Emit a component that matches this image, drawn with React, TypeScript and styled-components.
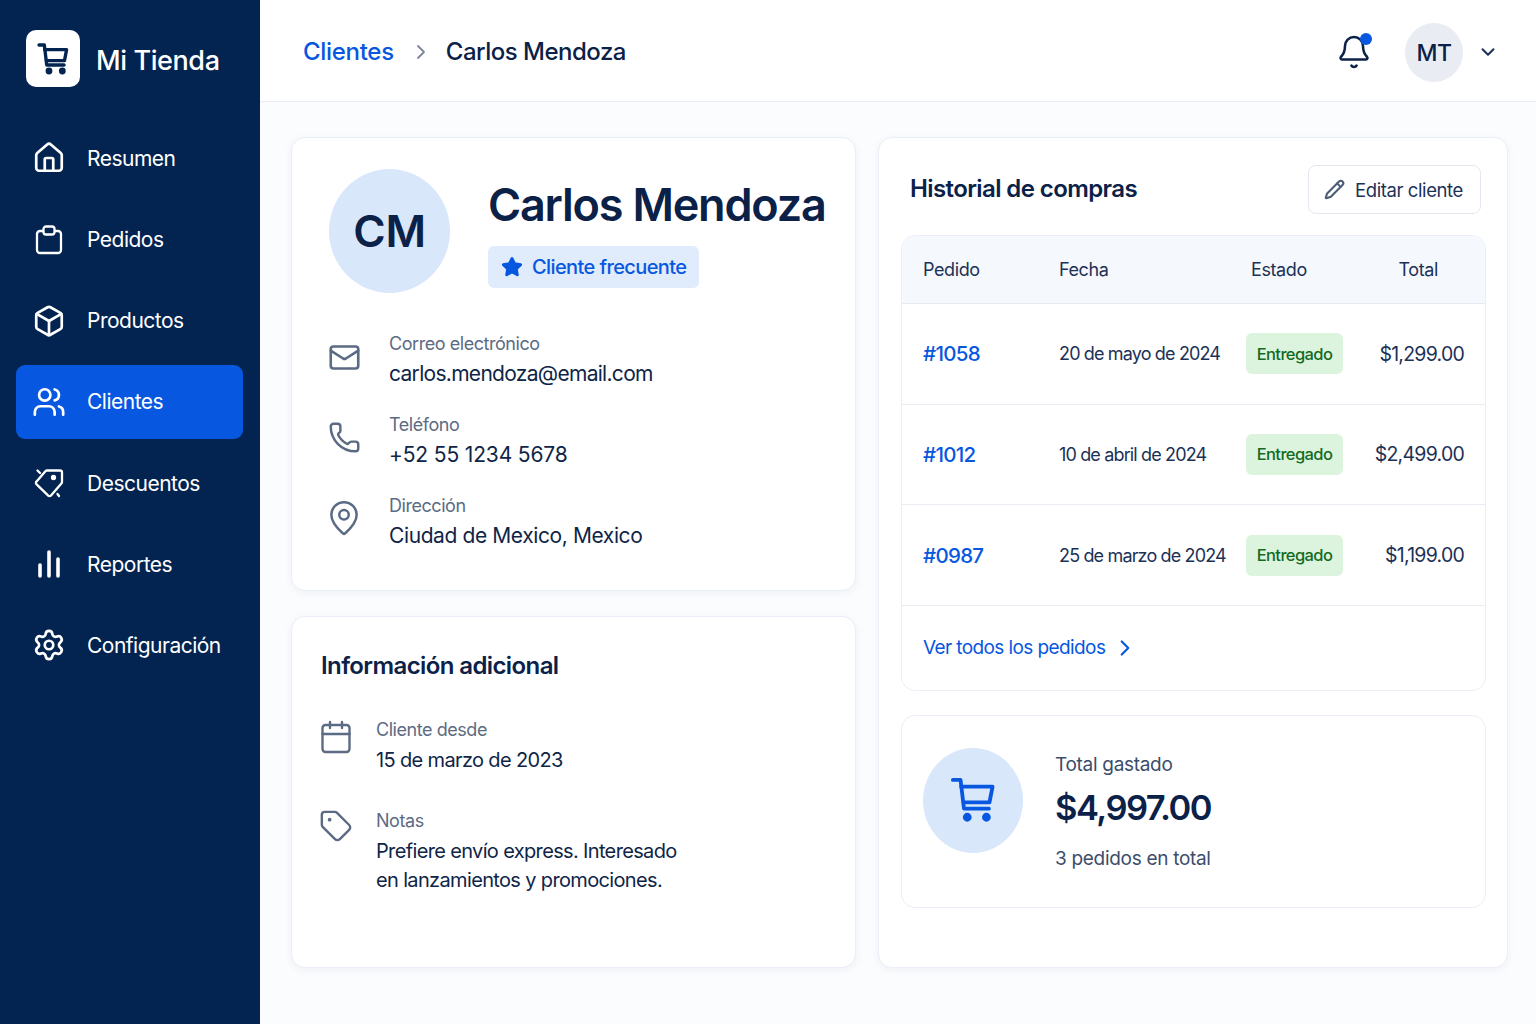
import styled, { createGlobalStyle } from "styled-components";
import {
  Bell,
  Box,
  Calendar,
  ChevronDown,
  ChevronRight,
  House,
  Mail,
  MapPin,
  Pencil,
  Phone,
  Settings,
  Star,
  Tag,
  Users,
} from "lucide-react";

const GlobalStyle = createGlobalStyle`
  * { box-sizing: border-box; }
  html, body { margin: 0; padding: 0; }
  body {
    font-family: Inter, "Noto Sans", "Liberation Sans", sans-serif;
    color: #0b2148;
    background: #fbfcfe;
  }
`;

const Page = styled.div`
  display: flex;
  width: 1536px;
  height: 1024px;
  overflow: hidden;
`;

const Sidebar = styled.aside`
  width: 260px;
  flex: none;
  background: #032451;
  padding: 30px 17px 0 16px;
`;

const Brand = styled.div`
  display: flex;
  align-items: center;
  gap: 16px;
  padding-left: 10px;
  margin-bottom: 34.4px;
`;

const BrandLogo = styled.div`
  width: 54px;
  height: 57px;
  border-radius: 10px;
  background: #ffffff;
  color: #032451;
  display: flex;
  align-items: center;
  justify-content: center;
`;

const BrandName = styled.span`
  color: #ffffff;
  font-size: 27px;
  font-weight: 500;
  letter-spacing: -0.4px;
  margin-top: 4px;
`;

const Nav = styled.nav`
  display: flex;
  flex-direction: column;
  gap: 7.17px;
`;

const NavItem = styled.a<{ $active?: boolean }>`
  height: 74px;
  display: flex;
  align-items: center;
  gap: 22px;
  padding-left: 17px;
  border-radius: 9px;
  color: #ffffff;
  font-size: 21px;
  letter-spacing: -0.5px;
  background: ${(p) => (p.$active ? "#0757e0" : "transparent")};
`;

const NavIcon = styled.span`
  width: 32px;
  height: 32px;
  flex: none;
  display: flex;
  align-items: center;
  justify-content: center;
  svg {
    flex: none;
  }
`;

const Main = styled.div`
  flex: 1;
  display: flex;
  flex-direction: column;
`;

const Topbar = styled.header`
  height: 102px;
  flex: none;
  background: #ffffff;
  border-bottom: 1px solid #e9edf3;
  display: flex;
  align-items: center;
  padding: 2px 37px 0 43px;
`;

const CrumbLink = styled.span`
  color: #0757e0;
  font-size: 24px;
  font-weight: 500;
  letter-spacing: -0.3px;
`;

const CrumbSeparator = styled.span`
  display: flex;
  color: #7c8699;
  margin: 0 13px 0 15px;
`;

const CrumbCurrent = styled.span`
  font-size: 24px;
  font-weight: 500;
  letter-spacing: -0.5px;
`;

const TopActions = styled.div`
  margin-left: auto;
  display: flex;
  align-items: center;
`;

const BellWrap = styled.div`
  position: relative;
  display: flex;
  margin-right: 33px;
`;

const BellDot = styled.span`
  position: absolute;
  top: -1px;
  right: 0;
  width: 12px;
  height: 12px;
  border-radius: 50%;
  background: #0757e0;
`;

const UserAvatar = styled.div`
  width: 58px;
  height: 59px;
  border-radius: 50%;
  background: #e9edf3;
  display: flex;
  align-items: center;
  justify-content: center;
  font-size: 23px;
  font-weight: 500;
  letter-spacing: -0.5px;
  margin: 2px 14px 0 0;
`;

const Content = styled.main`
  display: grid;
  grid-template-columns: 565px 630px;
  gap: 22px;
  padding: 35px 0 0 31px;
`;

const LeftColumn = styled.div`
  display: flex;
  flex-direction: column;
  gap: 25px;
`;

const Card = styled.section`
  background: #ffffff;
  border: 1px solid #eaeef6;
  border-radius: 14px;
  box-shadow: 0 2px 8px rgba(20, 40, 90, 0.05);
`;

const ProfileCard = styled(Card)`
  height: 454px;
  padding: 31px 20px 0 37px;
`;

const ProfileHead = styled.div`
  display: flex;
  gap: 38px;
  margin-bottom: 39px;
`;

const BigAvatar = styled.div`
  width: 121px;
  height: 124px;
  flex: none;
  border-radius: 50%;
  background: #d9e7fb;
  display: flex;
  align-items: center;
  justify-content: center;
  font-size: 44px;
  font-weight: 600;
  letter-spacing: -0.2px;
`;

const ProfileName = styled.h1`
  margin: 8px 0 13px;
  font-size: 45px;
  line-height: 56px;
  font-weight: 600;
  letter-spacing: -1.2px;
  white-space: nowrap;
`;

const FrequentBadge = styled.div`
  display: inline-flex;
  align-items: center;
  gap: 9px;
  height: 42px;
  padding: 0 13px;
  border-radius: 6px;
  background: #e0ebfc;
  color: #0757e0;
  font-size: 20px;
  font-weight: 500;
  letter-spacing: -0.6px;
`;

const InfoList = styled.div<{ $gap: number }>`
  display: flex;
  flex-direction: column;
  gap: ${(p) => p.$gap}px;
`;

const InfoRow = styled.div<{ $gap: number }>`
  display: flex;
  align-items: flex-start;
  gap: ${(p) => p.$gap}px;
`;

const InfoIcon = styled.div<{ $top: number }>`
  display: flex;
  justify-content: center;
  width: 30px;
  flex: none;
  color: #5c6b84;
  margin-top: ${(p) => p.$top}px;
  svg {
    flex: none;
  }
`;

const InfoLabel = styled.div`
  font-size: 18px;
  line-height: 24px;
  color: #5c6b84;
  letter-spacing: -0.45px;
`;

const InfoValue = styled.div<{ $spacing: number }>`
  font-size: 21px;
  line-height: 30px;
  margin-top: 3px;
  color: #0f2547;
  letter-spacing: ${(p) => p.$spacing}px;
`;

const ExtraValue = styled.div`
  font-size: 20px;
  line-height: 29px;
  margin-top: 4px;
  color: #0f2547;
  letter-spacing: -0.65px;
`;

const ExtraCard = styled(Card)`
  height: 352px;
  padding: 33px 28px 0 29px;
`;

const SectionTitle = styled.h2`
  margin: 0;
  font-size: 24px;
  line-height: 32px;
  font-weight: 600;
  letter-spacing: -0.6px;
`;

const ExtraTitle = styled(SectionTitle)`
  margin-bottom: 36px;
`;

const HistoryCard = styled(Card)`
  height: 831px;
  padding: 27px 21px 0 22px;
`;

const HistoryHead = styled.div`
  display: flex;
  align-items: center;
  justify-content: space-between;
  padding: 0 5px 0 9px;
  margin-bottom: 21px;
`;

const HistoryTitle = styled(SectionTitle)`
  margin-top: -2px;
`;

const EditButton = styled.button`
  display: flex;
  align-items: center;
  gap: 10px;
  height: 49px;
  width: 173px;
  padding: 0 0 0 15px;
  border: 1px solid #e2e7f0;
  border-radius: 8px;
  background: #ffffff;
  color: #1c3156;
  font-family: inherit;
  font-size: 18.5px;
  letter-spacing: -0.4px;
`;

const OrdersBox = styled.div`
  border: 1px solid #eaeef6;
  border-radius: 14px;
  overflow: hidden;
  margin-bottom: 24px;
`;

const OrdersHeader = styled.div`
  display: grid;
  grid-template-columns: 136px 192px 1fr auto;
  align-items: center;
  height: 68px;
  padding: 0 47px 0 21px;
  background: #f5f8fd;
  border-bottom: 1px solid #e6ebf3;
  font-size: 18px;
  color: #1c3156;
  letter-spacing: -0.4px;
`;

const OrderRow = styled.div`
  display: grid;
  grid-template-columns: 136px 187px 97px 1fr;
  align-items: center;
  height: 100.67px;
  padding: 0 21px;
  border-bottom: 1px solid #e9edf3;
`;

const OrderId = styled.span`
  color: #0757e0;
  font-size: 20.5px;
  font-weight: 500;
  letter-spacing: -0.7px;
`;

const OrderDate = styled.span`
  font-size: 18px;
  color: #1c3156;
  letter-spacing: -0.85px;
  white-space: nowrap;
`;

const StatusBadge = styled.span`
  height: 41px;
  border-radius: 6px;
  background: #dcf3de;
  color: #136b1f;
  display: flex;
  align-items: center;
  justify-content: center;
  font-size: 16.5px;
  font-weight: 500;
  letter-spacing: -0.6px;
`;

const OrderTotal = styled.span`
  text-align: right;
  font-size: 19.5px;
  color: #1c3156;
  letter-spacing: -0.75px;
`;

const OrdersFooter = styled.a`
  display: flex;
  align-items: center;
  gap: 7px;
  height: 84px;
  padding-left: 21px;
  color: #0757e0;
  font-size: 19px;
  letter-spacing: -0.6px;
`;

const SummaryBox = styled.div`
  height: 193px;
  border: 1px solid #eaeef6;
  border-radius: 14px;
  display: flex;
  align-items: center;
  gap: 32px;
  padding: 2px 0 0 21px;
`;

const SummaryCircle = styled.div`
  width: 100px;
  height: 105px;
  flex: none;
  margin-bottom: 24px;
  border-radius: 50%;
  background: #d9e7fb;
  color: #0757e0;
  display: flex;
  align-items: center;
  justify-content: center;
`;

const SummaryLabel = styled.div`
  font-size: 19px;
  line-height: 28px;
  color: #3c4d6b;
  letter-spacing: -0.3px;
`;

const SummaryAmount = styled.div`
  font-size: 34.5px;
  line-height: 44px;
  font-weight: 600;
  margin: 7px 0 15px;
  letter-spacing: -1.5px;
`;

function CartIcon({ size, weight }: { size: number; weight: number }) {
  return (
    <svg width={size} height={size} viewBox="0 0 24 24" fill="none" stroke="currentColor" strokeWidth={weight} strokeLinecap="round" strokeLinejoin="round">
      <path d="M1.5 1.5h4l1.8 15h13" />
      <path d="M5.8 5h16.4l-1.6 8.2H7" />
      <circle cx="9" cy="21" r="1.3" fill="currentColor" />
      <circle cx="19" cy="21" r="1.3" fill="currentColor" />
    </svg>
  );
}

function OrdersIcon() {
  return (
    <svg width={32} height={32} viewBox="0 0 32 32" fill="none" stroke="currentColor" strokeWidth="2.3" strokeLinecap="round" strokeLinejoin="round">
      <path d="M10 7H7a3 3 0 0 0-3 3v16a3 3 0 0 0 3 3h18a3 3 0 0 0 3-3V10a3 3 0 0 0-3-3h-3" />
      <rect x="10.5" y="2.5" width="11" height="8" rx="2.5" />
    </svg>
  );
}

function DiscountIcon() {
  return (
    <svg width={32} height={32} viewBox="0 0 32 32" fill="none" stroke="currentColor" strokeWidth="2.3" strokeLinecap="round" strokeLinejoin="round">
      <path d="M14 3.5h13a2 2 0 0 1 2 2V15a2 2 0 0 1-.6 1.4L18 28.4a2 2 0 0 1-3 0L3.6 17.4a2 2 0 0 1 0-3l9-10.3a2 2 0 0 1 1.4-.6Z" />
      <circle cx="20.5" cy="10.5" r="1.5" fill="currentColor" />
      <path d="M4.5 3.5 7 6" />
      <path d="m24.5 27 1.5 2" />
    </svg>
  );
}

function ReportsIcon() {
  return (
    <svg width={32} height={32} viewBox="0 0 32 32" fill="none" stroke="currentColor" strokeWidth="3.6" strokeLinecap="round">
      <path d="M7 17v11" />
      <path d="M16 4v24" />
      <path d="M25 11v17" />
    </svg>
  );
}

const navItems = [
  { label: "Resumen", icon: <House size={34} strokeWidth={1.9} /> },
  { label: "Pedidos", icon: <OrdersIcon /> },
  { label: "Productos", icon: <Box size={34} strokeWidth={1.9} /> },
  { label: "Clientes", icon: <Users size={34} strokeWidth={1.9} />, active: true },
  { label: "Descuentos", icon: <DiscountIcon /> },
  { label: "Reportes", icon: <ReportsIcon /> },
  { label: "Configuración", icon: <Settings size={34} strokeWidth={1.9} /> },
];

const orders = [
  { id: "#1058", date: "20 de mayo de 2024", total: "$1,299.00" },
  { id: "#1012", date: "10 de abril de 2024", total: "$2,499.00" },
  { id: "#0987", date: "25 de marzo de 2024", total: "$1,199.00" },
];

export default function App() {
  return (
    <Page>
      <GlobalStyle />
      <Sidebar>
        <Brand>
          <BrandLogo>
            <CartIcon size={32} weight={2.5} />
          </BrandLogo>
          <BrandName>Mi Tienda</BrandName>
        </Brand>
        <Nav>
          {navItems.map((item) => (
            <NavItem key={item.label} $active={item.active}>
              <NavIcon>{item.icon}</NavIcon>
              {item.label}
            </NavItem>
          ))}
        </Nav>
      </Sidebar>
      <Main>
        <Topbar>
          <CrumbLink>Clientes</CrumbLink>
          <CrumbSeparator>
            <ChevronRight size={24} strokeWidth={1.8} />
          </CrumbSeparator>
          <CrumbCurrent>Carlos Mendoza</CrumbCurrent>
          <TopActions>
            <BellWrap>
              <Bell size={36} strokeWidth={1.7} />
              <BellDot />
            </BellWrap>
            <UserAvatar>MT</UserAvatar>
            <ChevronDown size={22} strokeWidth={2.2} color="#1c3156" />
          </TopActions>
        </Topbar>
        <Content>
          <LeftColumn>
            <ProfileCard>
              <ProfileHead>
                <BigAvatar>CM</BigAvatar>
                <div>
                  <ProfileName>Carlos Mendoza</ProfileName>
                  <FrequentBadge>
                    <Star size={22} fill="currentColor" />
                    Cliente frecuente
                  </FrequentBadge>
                </div>
              </ProfileHead>
              <InfoList $gap={24}>
                <InfoRow $gap={30}>
                  <InfoIcon $top={9}>
                    <Mail size={33} strokeWidth={1.9} />
                  </InfoIcon>
                  <div>
                    <InfoLabel>Correo electrónico</InfoLabel>
                    <InfoValue $spacing={-0.7}>carlos.mendoza@email.com</InfoValue>
                  </div>
                </InfoRow>
                <InfoRow $gap={30}>
                  <InfoIcon $top={8}>
                    <Phone size={33} strokeWidth={1.8} />
                  </InfoIcon>
                  <div>
                    <InfoLabel>Teléfono</InfoLabel>
                    <InfoValue $spacing={-0.15}>+52 55 1234 5678</InfoValue>
                  </div>
                </InfoRow>
                <InfoRow $gap={30}>
                  <InfoIcon $top={5}>
                    <MapPin size={38} strokeWidth={1.6} />
                  </InfoIcon>
                  <div>
                    <InfoLabel>Dirección</InfoLabel>
                    <InfoValue $spacing={-0.4}>Ciudad de Mexico, Mexico</InfoValue>
                  </div>
                </InfoRow>
              </InfoList>
            </ProfileCard>
            <ExtraCard>
              <ExtraTitle>Información adicional</ExtraTitle>
              <InfoList $gap={34}>
                <InfoRow $gap={25}>
                  <InfoIcon $top={1}>
                    <Calendar size={36} strokeWidth={1.6} />
                  </InfoIcon>
                  <div>
                    <InfoLabel>Cliente desde</InfoLabel>
                    <ExtraValue>15 de marzo de 2023</ExtraValue>
                  </div>
                </InfoRow>
                <InfoRow $gap={25}>
                  <InfoIcon $top={0}>
                    <Tag size={34} strokeWidth={1.7} />
                  </InfoIcon>
                  <div>
                    <InfoLabel>Notas</InfoLabel>
                    <ExtraValue>
                      Prefiere envío express. Interesado
                      <br />
                      en lanzamientos y promociones.
                    </ExtraValue>
                  </div>
                </InfoRow>
              </InfoList>
            </ExtraCard>
          </LeftColumn>
          <HistoryCard>
            <HistoryHead>
              <HistoryTitle>Historial de compras</HistoryTitle>
              <EditButton>
                <Pencil size={21} strokeWidth={2.4} color="#4d5d78" />
                Editar cliente
              </EditButton>
            </HistoryHead>
            <OrdersBox>
              <OrdersHeader>
                <span>Pedido</span>
                <span>Fecha</span>
                <span>Estado</span>
                <span>Total</span>
              </OrdersHeader>
              {orders.map((order) => (
                <OrderRow key={order.id}>
                  <OrderId>{order.id}</OrderId>
                  <OrderDate>{order.date}</OrderDate>
                  <StatusBadge>Entregado</StatusBadge>
                  <OrderTotal>{order.total}</OrderTotal>
                </OrderRow>
              ))}
              <OrdersFooter>
                Ver todos los pedidos
                <ChevronRight size={26} strokeWidth={2} />
              </OrdersFooter>
            </OrdersBox>
            <SummaryBox>
              <SummaryCircle>
                <CartIcon size={46} weight={2} />
              </SummaryCircle>
              <div>
                <SummaryLabel>Total gastado</SummaryLabel>
                <SummaryAmount>$4,997.00</SummaryAmount>
                <SummaryLabel>3 pedidos en total</SummaryLabel>
              </div>
            </SummaryBox>
          </HistoryCard>
        </Content>
      </Main>
    </Page>
  );
}
